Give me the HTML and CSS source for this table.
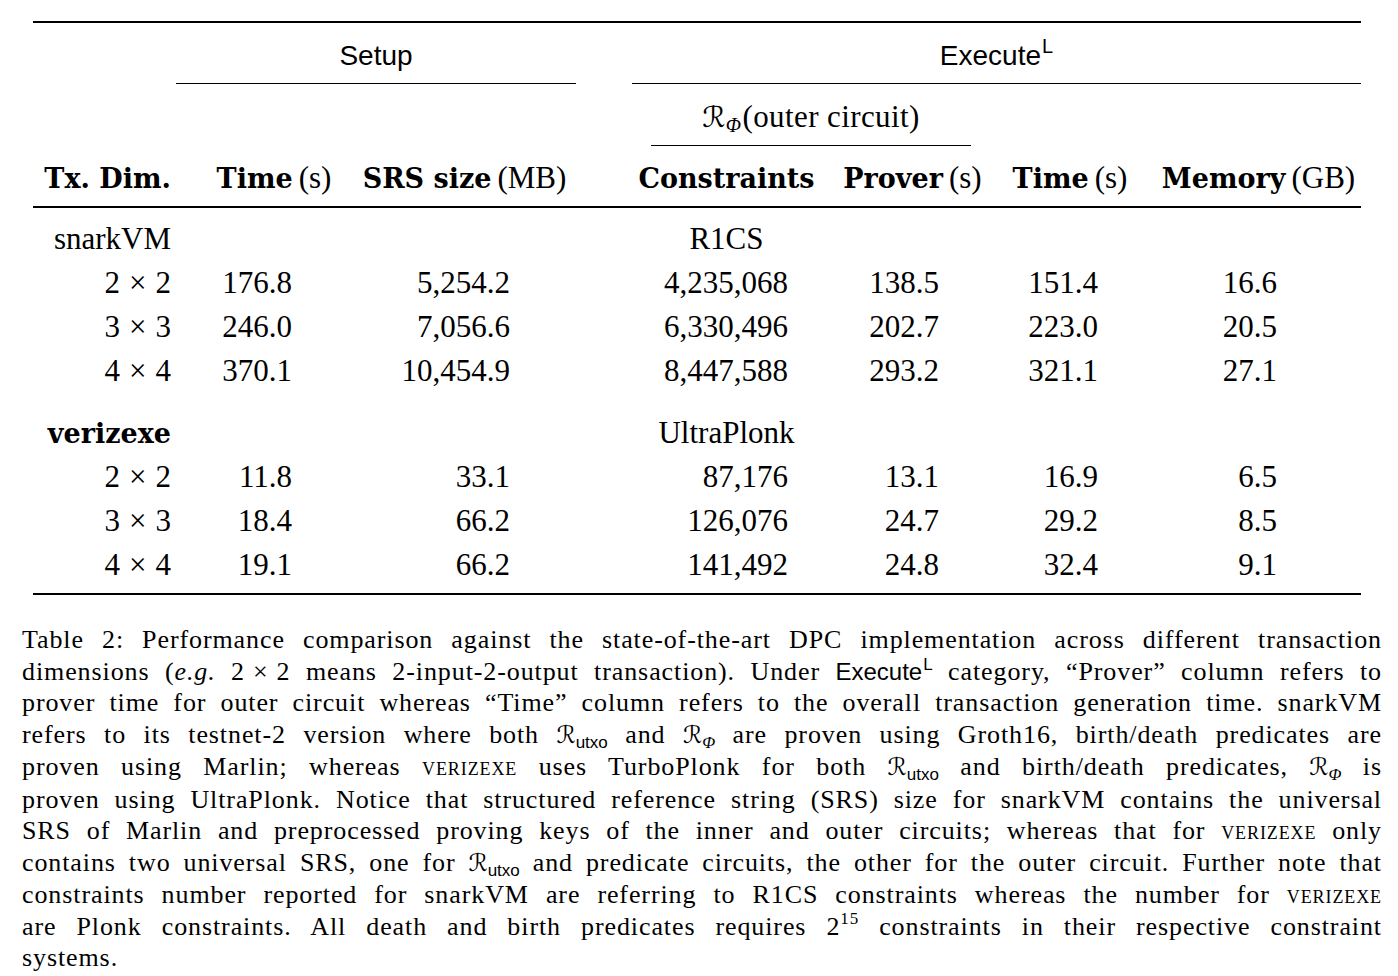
FILE: index.html
```html
<!DOCTYPE html>
<html lang="en">
<head>
<meta charset="utf-8">
<title>Table 2</title>
<link rel="stylesheet" href="styles.css">
</head>
<body>
<div class="page">
  <div class="tbl">
    <div class="rule-thick"></div>
    <div class="row grp-row">
      <div class="grp grp-setup"><span class="sf">Setup</span></div>
      <div class="grp grp-exec"><span class="sf">Execute<sup class="sfsup">L</sup></span></div>
    </div>
    <div class="row outer-row">
      <div class="outer"><span class="cal">ℛ</span><sub class="isub">Φ</sub>(outer circuit)</div>
    </div>
    <div class="row head-row">
      <div class="c1 hr"><span class="b">Tx. Dim.</span></div>
      <div class="c2 hc"><span class="b">Time</span><span class="unit">(s)</span></div>
      <div class="c3 hc"><span class="b">SRS size</span><span class="unit">(MB)</span></div>
      <div class="c4 hc"><span class="b">Constraints</span></div>
      <div class="c5 hc"><span class="b">Prover</span><span class="unit">(s)</span></div>
      <div class="c6 hc"><span class="b">Time</span><span class="unit">(s)</span></div>
      <div class="c7 hc"><span class="b">Memory</span><span class="unit">(GB)</span></div>
    </div>
    <div class="rule-mid"></div>

    <div class="row body-row">
      <div class="c1 n">snarkVM</div><div></div><div></div>
      <div class="c4 hc">R1CS</div><div></div><div></div><div></div>
    </div>
    <div class="row body-row">
      <div class="c1 n">2<span class="op">×</span>2</div>
      <div class="c2 n">176.8</div><div class="c3 n">5,254.2</div><div class="c4 n">4,235,068</div>
      <div class="c5 n">138.5</div><div class="c6 n">151.4</div><div class="c7 n">16.6</div>
    </div>
    <div class="row body-row">
      <div class="c1 n">3<span class="op">×</span>3</div>
      <div class="c2 n">246.0</div><div class="c3 n">7,056.6</div><div class="c4 n">6,330,496</div>
      <div class="c5 n">202.7</div><div class="c6 n">223.0</div><div class="c7 n">20.5</div>
    </div>
    <div class="row body-row">
      <div class="c1 n">4<span class="op">×</span>4</div>
      <div class="c2 n">370.1</div><div class="c3 n">10,454.9</div><div class="c4 n">8,447,588</div>
      <div class="c5 n">293.2</div><div class="c6 n">321.1</div><div class="c7 n">27.1</div>
    </div>

    <div class="row body-row group-gap">
      <div class="c1 n"><span class="b">verizexe</span></div><div></div><div></div>
      <div class="c4 hc">UltraPlonk</div><div></div><div></div><div></div>
    </div>
    <div class="row body-row">
      <div class="c1 n">2<span class="op">×</span>2</div>
      <div class="c2 n">11.8</div><div class="c3 n">33.1</div><div class="c4 n">87,176</div>
      <div class="c5 n">13.1</div><div class="c6 n">16.9</div><div class="c7 n">6.5</div>
    </div>
    <div class="row body-row">
      <div class="c1 n">3<span class="op">×</span>3</div>
      <div class="c2 n">18.4</div><div class="c3 n">66.2</div><div class="c4 n">126,076</div>
      <div class="c5 n">24.7</div><div class="c6 n">29.2</div><div class="c7 n">8.5</div>
    </div>
    <div class="row body-row">
      <div class="c1 n">4<span class="op">×</span>4</div>
      <div class="c2 n">19.1</div><div class="c3 n">66.2</div><div class="c4 n">141,492</div>
      <div class="c5 n">24.8</div><div class="c6 n">32.4</div><div class="c7 n">9.1</div>
    </div>
    <div class="rule-thick rule-bottom"></div>
  </div>

  <p class="caption">
    <span class="ln">Table 2: Performance comparison against the state-of-the-art DPC implementation across different transaction</span>
    <span class="ln">dimensions (<i>e.g.</i> 2<span class="cop">×</span>2 means 2-input-2-output transaction). Under <span class="csf">Execute<sup class="csup">L</sup></span> category, “Prover” column refers to</span>
    <span class="ln">prover time for outer circuit whereas “Time” column refers to the overall transaction generation time. snarkVM</span>
    <span class="ln">refers to its testnet-2 version where both <span class="ccal">ℛ</span><sub class="ssub">utxo</sub> and <span class="ccal">ℛ</span><sub class="cisub">Φ</sub> are proven using Groth16, birth/death predicates are</span>
    <span class="ln">proven using Marlin; whereas <span class="sc">verizexe</span> uses TurboPlonk for both <span class="ccal">ℛ</span><sub class="ssub">utxo</sub> and birth/death predicates, <span class="ccal">ℛ</span><sub class="cisub">Φ</sub> is</span>
    <span class="ln">proven using UltraPlonk. Notice that structured reference string (SRS) size for snarkVM contains the universal</span>
    <span class="ln">SRS of Marlin and preprocessed proving keys of the inner and outer circuits; whereas that for <span class="sc">verizexe</span> only</span>
    <span class="ln">contains two universal SRS, one for <span class="ccal">ℛ</span><sub class="ssub">utxo</sub> and predicate circuits, the other for the outer circuit. Further note that</span>
    <span class="ln">constraints number reported for snarkVM are referring to R1CS constraints whereas the number for <span class="sc">verizexe</span></span>
    <span class="ln">are Plonk constraints. All death and birth predicates requires 2<sup class="pow">15</sup> constraints in their respective constraint</span>
    <span class="ln last">systems.</span>
  </p>
</div>
</body>
</html>
```

FILE: styles.css
```css
html, body {
  margin: 0;
  padding: 0;
  background: #ffffff;
  color: #000000;
  font-family: "Liberation Serif", "Times New Roman", serif;
}

.page {
  padding-top: 21px;
  width: 1398px;
}

/* ---------- table ---------- */
.tbl {
  margin-left: 33px;
  width: 1328px;
  display: flex;
  flex-direction: column;
  font-size: 31px;
}

.row {
  display: grid;
  grid-template-columns: 160px 153px 258px 224px 169px 146px 218px;
}

.rule-thick {
  height: 2.4px;
  background: #000;
}

.rule-bottom {
  margin-top: 6px;
}

.rule-mid {
  height: 1.6px;
  background: #000;
  margin-bottom: 9px;
}

.grp {
  padding-top: 3px;
  height: 57px;
  line-height: 57px;
  border-bottom: 1px solid #000;
  text-align: center;
  white-space: nowrap;
}

.grp-setup {
  grid-column: 2 / 4;
  margin-left: -17px;
  margin-right: 28px;
}

.grp-exec {
  grid-column: 4 / 8;
  margin-left: 28px;
}

.sf {
  font-family: "Liberation Sans", Arial, sans-serif;
  font-size: 28px;
}

.sfsup {
  font-size: 20px;
  vertical-align: 12px;
  line-height: 0;
  margin-left: 1px;
}

.outer {
  grid-column: 4 / 6;
  margin-left: 47px;
  margin-right: 26px;
  padding-top: 4px;
  height: 57px;
  line-height: 57px;
  border-bottom: 1px solid #000;
  text-align: center;
  white-space: nowrap;
  letter-spacing: 0.4px;
}

.cal {
  font-family: "DejaVu Sans", "DejaVu Serif", serif;
  font-style: italic;
  font-size: 29px;
}

.isub {
  font-style: italic;
  font-size: 20px;
  vertical-align: -5px;
  line-height: 0;
  margin-right: 1px;
}

.head-row > div {
  padding-top: 3px;
  height: 57px;
  line-height: 57px;
  white-space: nowrap;
}

.b {
  font-family: "DejaVu Serif", "Liberation Serif", serif;
  font-weight: bold;
  font-size: 27px;
}

.unit {
  margin-left: 6px;
}

.hr {
  text-align: right;
  padding-right: 22px;
}

.hc {
  text-align: center;
}

.c2.hc { padding-left: 9px; }
.c3.hc { padding-right: 21px; }
.c4.hc { padding-left: 21px; }
.c7.hc { padding-left: 13px; }

.body-row > div {
  height: 44px;
  line-height: 44px;
  white-space: nowrap;
}

.group-gap {
  margin-top: 18px;
}

.n {
  text-align: right;
}

.c1.n { padding-right: 22px; }
.c2.n { padding-right: 54px; }
.c3.n { padding-right: 94px; }
.c4.n { padding-right: 40px; }
.c5.n { padding-right: 58px; }
.c6.n { padding-right: 45px; }
.c7.n { padding-right: 84px; }

.op {
  margin: 0 9px;
}

/* ---------- caption ---------- */
.caption {
  margin: 29px 0 0 22px;
  width: 1360px;
  font-size: 26px;
  line-height: 31.5px;
  letter-spacing: 0.9px;
}

.ln {
  display: block;
  text-align: justify;
  text-align-last: justify;
}

.ln.last {
  text-align-last: left;
}

.cop {
  margin: 0 8px;
}

.csf {
  font-family: "Liberation Sans", Arial, sans-serif;
  font-size: 24px;
  letter-spacing: 0;
}

.csup {
  font-size: 17px;
  vertical-align: 10px;
  line-height: 0;
  margin-left: 1px;
}

.ccal {
  font-family: "DejaVu Sans", "DejaVu Serif", serif;
  font-style: italic;
  font-size: 24px;
  letter-spacing: 0;
}

.ssub {
  font-family: "Liberation Sans", Arial, sans-serif;
  font-size: 17px;
  vertical-align: -5px;
  line-height: 0;
  letter-spacing: 0;
}

.cisub {
  font-style: italic;
  font-size: 17px;
  vertical-align: -5px;
  line-height: 0;
  letter-spacing: 0;
}

.sc {
  font-variant: small-caps;
}

.pow {
  font-size: 17px;
  vertical-align: 11px;
  line-height: 0;
}
```
